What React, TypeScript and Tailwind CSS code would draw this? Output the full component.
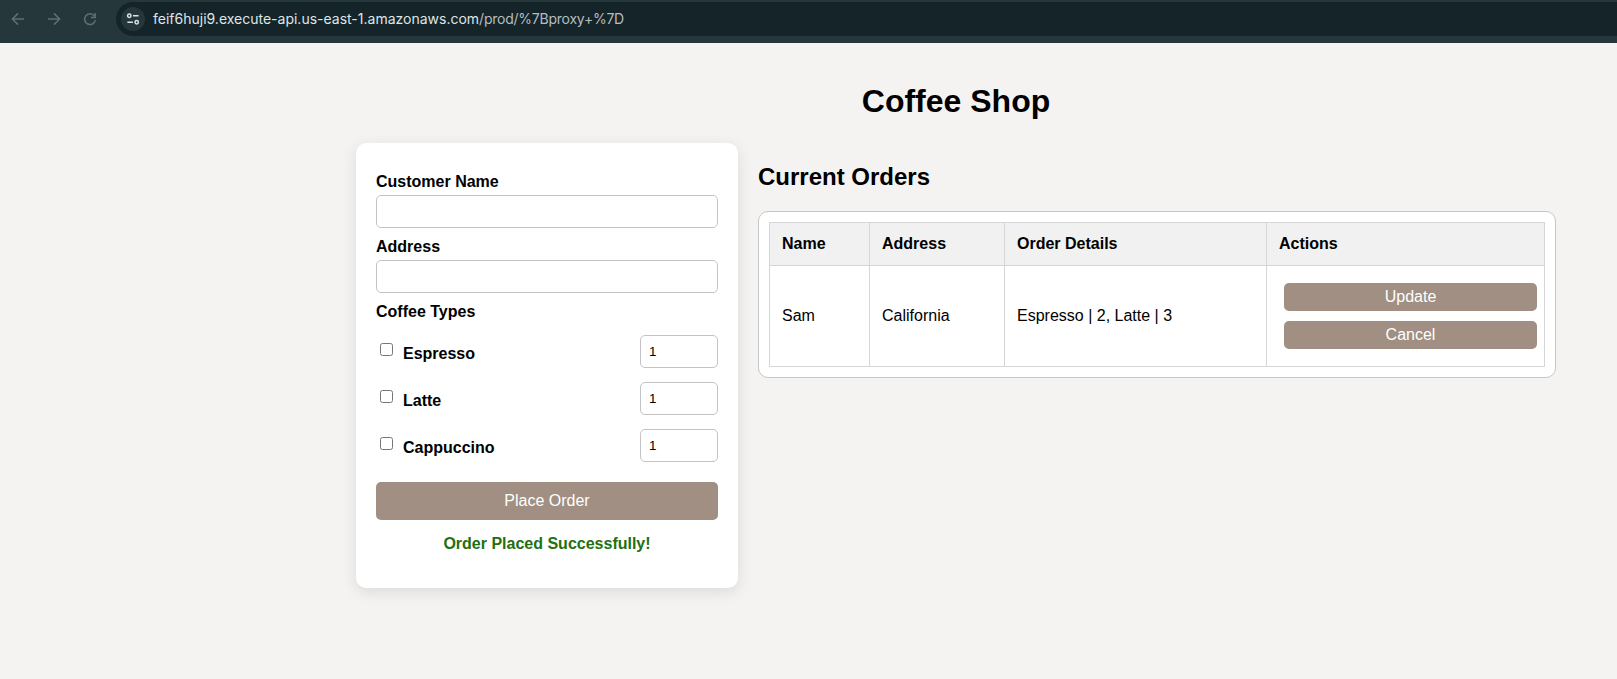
import { useState } from "react";

const coffees = ["Espresso", "Latte", "Cappuccino"];

const inputClass =
  "block h-[33px] w-full rounded-[5px] border border-[#c3c3c5] bg-white px-2 text-[13.333px] leading-[15px] text-black outline-none";

function BrowserBar() {
  return (
    <div className="flex h-[43px] items-start bg-[#26373b] pt-[2px]">
      <div className="flex h-[34px] w-[116px] shrink-0 items-center text-[#5f6e72]">
        <svg className="ml-[11px] h-[14px] w-[14px]" viewBox="0 0 14 14" fill="none" stroke="currentColor" strokeWidth="1.5">
          <path d="M13 7H1.8M7 1.4 1.4 7 7 12.6" />
        </svg>
        <svg className="ml-[22px] h-[14px] w-[14px]" viewBox="0 0 14 14" fill="none" stroke="currentColor" strokeWidth="1.5">
          <path d="M1 7h11.2M7 1.4 12.6 7 7 12.6" />
        </svg>
        <svg className="ml-[22px] h-[14px] w-[14px]" viewBox="0 0 14 14" fill="none" stroke="currentColor" strokeWidth="1.5">
          <path d="M11.4 4A5.4 5.4 0 1 0 12.3 8.2M12.2 1v4.4H7.8" />
        </svg>
      </div>
      <div className="flex h-[34px] grow items-center rounded-l-full bg-[#152429] pl-[5px]">
        <span className="flex h-6 w-6 items-center justify-center rounded-full bg-[#26373b]">
          <svg className="h-[14px] w-[14px]" viewBox="0 0 14 14" fill="none" stroke="#dde4e6" strokeWidth="1.5">
            <circle cx="3.3" cy="3.8" r="1.7" />
            <path d="M7 3.8h5.6M1.4 10.2H7" />
            <circle cx="10.7" cy="10.2" r="1.7" />
          </svg>
        </span>
        <span className="ml-2 whitespace-nowrap font-['Inter',sans-serif] text-[14px] leading-5 text-[#dfe5e7]">
          feif6huji9.execute-api.us-east-1.amazonaws.com
          <span className="tracking-[-0.24px] text-[#b4bdc0]">/prod/%7Bproxy+%7D</span>
        </span>
      </div>
    </div>
  );
}

function CoffeeRow({ name }: { name: string }) {
  const [qty, setQty] = useState("1");
  return (
    <div className="flex h-[33px] items-center">
      <input
        type="checkbox"
        aria-label={name}
        className="mb-1 ml-1 h-[13px] w-[13px] shrink-0 appearance-none rounded-[2.5px] border border-[#767676] bg-white checked:bg-[#0075ff]"
      />
      <span className="ml-[10px] mt-1 grow font-bold leading-[18px]">{name}</span>
      <div className="w-[78px]">
        <input className={inputClass} value={qty} onChange={(e) => setQty(e.target.value)} aria-label="Quantity" />
      </div>
    </div>
  );
}

function OrderForm() {
  return (
    <form
      onSubmit={(e) => e.preventDefault()}
      className="h-[445px] w-[382px] shrink-0 rounded-[10px] bg-white px-5 pt-[30px] shadow-[0_4px_15px_rgba(0,0,0,0.1)]"
    >
      <label className="block h-[22px] font-bold leading-[18px]" htmlFor="name">Customer Name</label>
      <input id="name" className={inputClass} />
      <label className="mt-[10px] block h-[22px] font-bold leading-[18px]" htmlFor="address">Address</label>
      <input id="address" className={inputClass} />
      <div className="mt-[10px] font-bold leading-[18px]">Coffee Types</div>
      <div className="mt-[14px] flex flex-col gap-[14px]">
        {coffees.map((c) => (
          <CoffeeRow key={c} name={c} />
        ))}
      </div>
      <button className="mt-5 block h-[38px] w-full rounded-[5px] bg-[#a08f82] text-white">Place Order</button>
      <p className="mt-[15px] text-center font-bold leading-[18px] text-[#22700f]">Order Placed Successfully!</p>
    </form>
  );
}

const cell = "border border-[#d6d6d6] px-3 text-left";

function OrdersTable() {
  return (
    <div className="rounded-[10px] border border-[#c5c6c6] bg-white p-[10px]">
      <table className="w-full table-fixed border-collapse">
        <colgroup>
          <col className="w-[100px]" />
          <col className="w-[135px]" />
          <col className="w-[262px]" />
          <col />
        </colgroup>
        <thead>
          <tr className="h-[43px] bg-[#f1f1f1]">
            <th className={cell}>Name</th>
            <th className={cell}>Address</th>
            <th className={cell}>Order Details</th>
            <th className={cell}>Actions</th>
          </tr>
        </thead>
        <tbody>
          <tr className="h-[101px]">
            <td className={cell}>Sam</td>
            <td className={cell}>California</td>
            <td className={cell}>Espresso | 2, Latte | 3</td>
            <td className="border border-[#d6d6d6] pl-[17px] pr-[7px]">
              <div className="flex flex-col gap-[10px]">
                <button className="h-7 rounded-[5px] bg-[#a08f82] leading-[18px] text-white">Update</button>
                <button className="h-7 rounded-[5px] bg-[#a08f82] leading-[18px] text-white">Cancel</button>
              </div>
            </td>
          </tr>
        </tbody>
      </table>
    </div>
  );
}

export default function App() {
  return (
    <div className="flex h-[679px] w-[1617px] flex-col overflow-hidden bg-[#f4f3f1] font-['Liberation_Sans',Arial,sans-serif] text-base leading-[18px] text-black">
      <BrowserBar />
      <main className="ml-[356px] w-[1200px]">
        <h1 className="pt-10 text-center text-[32px] font-bold leading-9">Coffee Shop</h1>
        <div className="mt-6 flex gap-5">
          <OrderForm />
          <section className="grow">
            <h2 className="mb-5 mt-5 text-2xl font-bold leading-7">Current Orders</h2>
            <OrdersTable />
          </section>
        </div>
      </main>
    </div>
  );
}
